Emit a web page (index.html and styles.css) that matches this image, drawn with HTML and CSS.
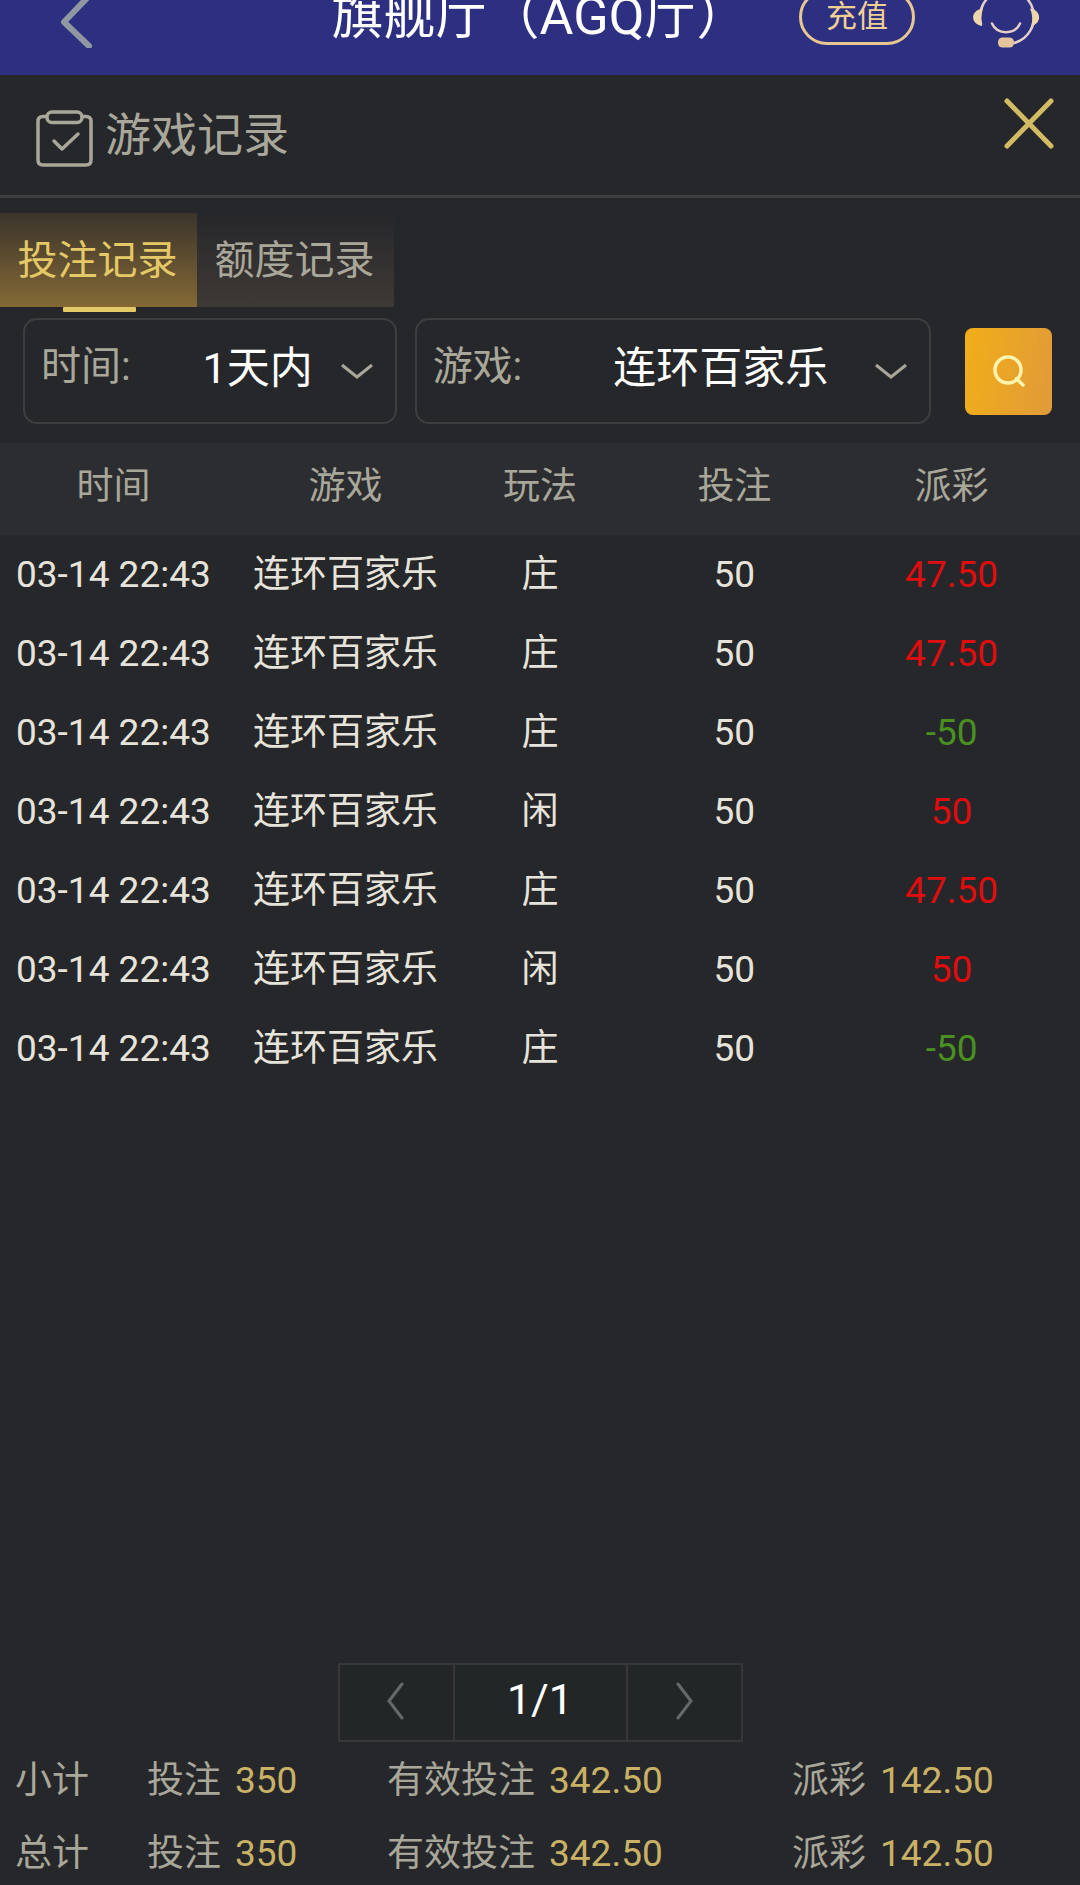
FILE: index.html
```html
<!DOCTYPE html>
<html lang="zh-CN">

<head>
    <meta charset="UTF-8">
    <meta name="viewport" content="width=device-width, initial-scale=1.0">
    <title>游戏记录</title>
    <link rel="stylesheet" href="styles.css">
</head>

<body>
    <header class="topbar">
        <button class="back" type="button" aria-label="返回">
            <svg width="34" height="62" viewBox="0 0 34 62" fill="none" stroke="#8f97a3" stroke-width="6" stroke-linecap="round" stroke-linejoin="round">
                <path d="M30 10L5 36L30 60" />
            </svg>
        </button>
        <h1>旗舰厅（AGQ厅）</h1>
        <button class="recharge" type="button">充值</button>
        <button class="service" type="button" aria-label="客服">
            <svg width="68" height="66" viewBox="0 0 68 66" fill="none" stroke="#e6cfc8" stroke-width="2.500" stroke-linecap="round">
                <path d="M9 40A27 27 0 1 1 42 59" />
                <path d="M20 39.500C25 51 43 51 48 39.500" />
                <path d="M11 24.500C-2 26 -2 40 10 42Q8 33 11 24.500ZM58 24.500C70 26 70 40 59 42Q62 33 58 24.500Z" fill="#edd5ac" stroke="none" />
                <rect x="26" y="53.500" width="16" height="10" rx="4.500" fill="#e6c49c" stroke="none" />
            </svg>
        </button>
    </header>

    <main class="panel">
        <div class="panel-title">
            <svg class="clipboard" width="58" height="58" viewBox="0 0 58 58" fill="none" stroke="#a9a799" stroke-width="3.500" stroke-linecap="round" stroke-linejoin="round">
                <path d="M11 6.500H8Q3 6.500 3 11.500V50Q3 55 8 55H51Q56 55 56 50V11.500Q56 6.500 51 6.500H47" />
                <rect x="12" y="2" width="35" height="10.500" rx="5" />
                <path d="M19 31L27 39L43 24" />
            </svg>
            <h2>游戏记录</h2>
            <button class="close" type="button" aria-label="关闭">
                <svg width="50" height="51" viewBox="0 0 50 51" stroke="#d2bb62" stroke-width="5" stroke-linecap="round">
                    <path d="M3 3L47 48M47 3L3 48" />
                </svg>
            </button>
        </div>

        <nav class="tabs">
            <button class="tab active" type="button">投注记录</button>
            <button class="tab" type="button">额度记录</button>
        </nav>

        <form class="filters">
            <div class="field field-time">
                <label for="time">时间:</label>
                <select id="time">
                    <option>1天内</option>
                </select>
                <svg class="arrow" width="34" height="18" viewBox="0 0 34 18" fill="none" stroke="#a9a799" stroke-width="3">
                    <path d="M2 2L17 14L32 2" />
                </svg>
            </div>
            <div class="field field-game">
                <label for="game">游戏:</label>
                <select id="game">
                    <option>连环百家乐</option>
                </select>
                <svg class="arrow" width="34" height="18" viewBox="0 0 34 18" fill="none" stroke="#a9a799" stroke-width="3">
                    <path d="M2 2L17 14L32 2" />
                </svg>
            </div>
            <button class="search" type="button" aria-label="搜索">
                <svg width="34" height="34" viewBox="0 0 34 34" fill="none" stroke="#fff3b0" stroke-width="3.500" stroke-linecap="round">
                    <circle cx="16" cy="16" r="13" />
                    <path d="M24.500 24.500L31 31" />
                </svg>
            </button>
        </form>

        <table class="records">
            <thead>
                <tr>
                    <th class="col-time">时间</th>
                    <th class="col-game">游戏</th>
                    <th class="col-play">玩法</th>
                    <th class="col-bet">投注</th>
                    <th class="col-pay">派彩</th>
                </tr>
            </thead>
            <tbody>
                <tr>
                    <td>03-14 22:43</td>
                    <td>连环百家乐</td>
                    <td>庄</td>
                    <td>50</td>
                    <td class="win">47.50</td>
                </tr>
                <tr>
                    <td>03-14 22:43</td>
                    <td>连环百家乐</td>
                    <td>庄</td>
                    <td>50</td>
                    <td class="win">47.50</td>
                </tr>
                <tr>
                    <td>03-14 22:43</td>
                    <td>连环百家乐</td>
                    <td>庄</td>
                    <td>50</td>
                    <td class="lose">-50</td>
                </tr>
                <tr>
                    <td>03-14 22:43</td>
                    <td>连环百家乐</td>
                    <td>闲</td>
                    <td>50</td>
                    <td class="win">50</td>
                </tr>
                <tr>
                    <td>03-14 22:43</td>
                    <td>连环百家乐</td>
                    <td>庄</td>
                    <td>50</td>
                    <td class="win">47.50</td>
                </tr>
                <tr>
                    <td>03-14 22:43</td>
                    <td>连环百家乐</td>
                    <td>闲</td>
                    <td>50</td>
                    <td class="win">50</td>
                </tr>
                <tr>
                    <td>03-14 22:43</td>
                    <td>连环百家乐</td>
                    <td>庄</td>
                    <td>50</td>
                    <td class="lose">-50</td>
                </tr>
            </tbody>
        </table>

        <div class="pager">
            <button type="button" aria-label="上一页">
                <svg width="18" height="38" viewBox="0 0 18 38" fill="none" stroke="#66696a" stroke-width="3" stroke-linecap="round">
                    <path d="M15 2L2 19L15 36" />
                </svg>
            </button>
            <span class="page">1/1</span>
            <button type="button" aria-label="下一页">
                <svg width="18" height="38" viewBox="0 0 18 38" fill="none" stroke="#66696a" stroke-width="3" stroke-linecap="round">
                    <path d="M3 2L16 19L3 36" />
                </svg>
            </button>
        </div>

        <div class="summary">
            <div class="summary-row">
                <span>小计</span>
                <span>投注<b>350</b></span>
                <span>有效投注<b>342.50</b></span>
                <span>派彩<b>142.50</b></span>
            </div>
            <div class="summary-row">
                <span>总计</span>
                <span>投注<b>350</b></span>
                <span>有效投注<b>342.50</b></span>
                <span>派彩<b>142.50</b></span>
            </div>
        </div>
    </main>
</body>

</html>
```

FILE: styles.css
```css
* {
    box-sizing: border-box;
}

body {
    margin: 0;
    min-height: 100vh;
    display: flex;
    flex-direction: column;
    overflow-x: hidden;
    background-color: #26272b;
    color: #a9a799;
    font-family: Roboto, "Noto Sans CJK SC", sans-serif;
    font-size: 37px;
}

button,
select {
    font-family: inherit;
    color: inherit;
    background: none;
    border: 0;
    padding: 0;
    cursor: pointer;
}

svg {
    display: block;
}

h1,
h2 {
    margin: 0;
    font-weight: normal;
}

/* Top bar, scrolled partly out of view */
.topbar {
    height: 117px;
    margin-top: -42px;
    padding: 0 40px 0 59px;
    display: flex;
    align-items: center;
    background-color: #2d2f80;
}

.topbar h1 {
    flex: 1;
    padding-left: 188px;
    text-align: center;
    font-size: 52px;
    line-height: 60px;
    white-space: nowrap;
    color: #fff;
}

.recharge {
    width: 116px;
    height: 56px;
    margin-right: 57px;
    border: 3px solid #e8c690;
    border-radius: 28px;
    font-size: 31px;
    line-height: 48px;
    color: #f0cf94;
}

/* Panel */
.panel {
    flex: 1;
    display: flex;
    flex-direction: column;
}

.panel-title {
    height: 123px;
    padding: 0 26px 0 35px;
    display: flex;
    align-items: center;
    gap: 12px;
    border-bottom: 3px solid #3c3d3f;
}

.clipboard {
    margin-top: 8px;
}

.panel-title h2 {
    flex: 1;
    font-size: 46px;
    line-height: 60px;
}

.close {
    margin-bottom: 24px;
}

.tabs {
    display: flex;
    margin-top: 15px;
}

.tab {
    position: relative;
    width: 197px;
    height: 94px;
    padding: 0 2px 6px 0;
    font-size: 40px;
    background: linear-gradient(#26272b, #3f3935);
}

.tab.active {
    color: #e5c966;
    background: linear-gradient(#3a342b, #846936);
}

.tab.active::after {
    content: "";
    position: absolute;
    left: 63px;
    bottom: -5px;
    width: 73px;
    height: 5px;
    border-radius: 1px;
    background-color: #e5c966;
}

/* Filters */
.filters {
    display: flex;
    align-items: center;
    margin-top: 11px;
    padding: 0 28px 0 23px;
}

.field {
    position: relative;
    display: flex;
    align-items: center;
    height: 106px;
    padding: 0 10px 6px 16px;
    border: 2px solid #3e3e40;
    border-radius: 14px;
    font-size: 40px;
    line-height: 50px;
}

.field-time {
    flex: 1 1 374px;
    margin-right: 18px;
}

.field-game {
    flex: 1 1 517px;
    margin-right: 34px;
}

.field label {
    padding-bottom: 2px;
}

.field select {
    flex: 1;
    min-width: 0;
    height: 80px;
    appearance: none;
    font-size: 43px;
    text-align: center;
    text-align-last: center;
    color: #fff;
}

.arrow {
    position: absolute;
    right: 21px;
    top: 43px;
    pointer-events: none;
}

.search {
    width: 87px;
    height: 87px;
    display: flex;
    align-items: center;
    justify-content: center;
    border-radius: 8px;
    background: linear-gradient(100deg, #f2ae18, #e09a3a);
}

/* Records */
.records {
    width: 100%;
    margin-top: 19px;
    table-layout: fixed;
    border-collapse: collapse;
    text-align: center;
    line-height: 50px;
    white-space: nowrap;
}

.records th {
    height: 92px;
    padding: 0 0 4px;
    font-weight: normal;
    background-color: #2c2d31;
}

.records td {
    height: 79px;
    padding: 0;
    color: #e6e4da;
}

.col-time {
    width: 21%;
}

.col-game {
    width: 22%;
}

.col-play {
    width: 14%;
}

.col-bet {
    width: 22%;
}

.records th:last-child,
.records td:last-child {
    padding-right: 30px;
}

.records .win {
    color: #df0d0d;
}

.records .lose {
    color: #4a9020;
}

/* Pager */
.pager {
    align-self: center;
    display: flex;
    margin-top: auto;
    border: 2px solid #353738;
    background-color: #232627;
}

.pager button {
    width: 113px;
    height: 75px;
    padding-bottom: 4px;
    display: flex;
    align-items: center;
    justify-content: center;
}

.page {
    width: 175px;
    border: solid #353738;
    border-width: 0 2px;
    text-align: center;
    font-size: 43px;
    line-height: 68px;
    color: #fff;
}

/* Totals */
.summary {
    margin-top: 8px;
}

.summary-row {
    display: grid;
    grid-template-columns: 132fr 240fr 405fr 288fr;
    padding-left: 15px;
    line-height: 62px;
    white-space: nowrap;
}

.summary-row + .summary-row {
    margin-top: 11px;
}

.summary b {
    margin-left: 14px;
    font-weight: normal;
    color: #c9b266;
}
```
